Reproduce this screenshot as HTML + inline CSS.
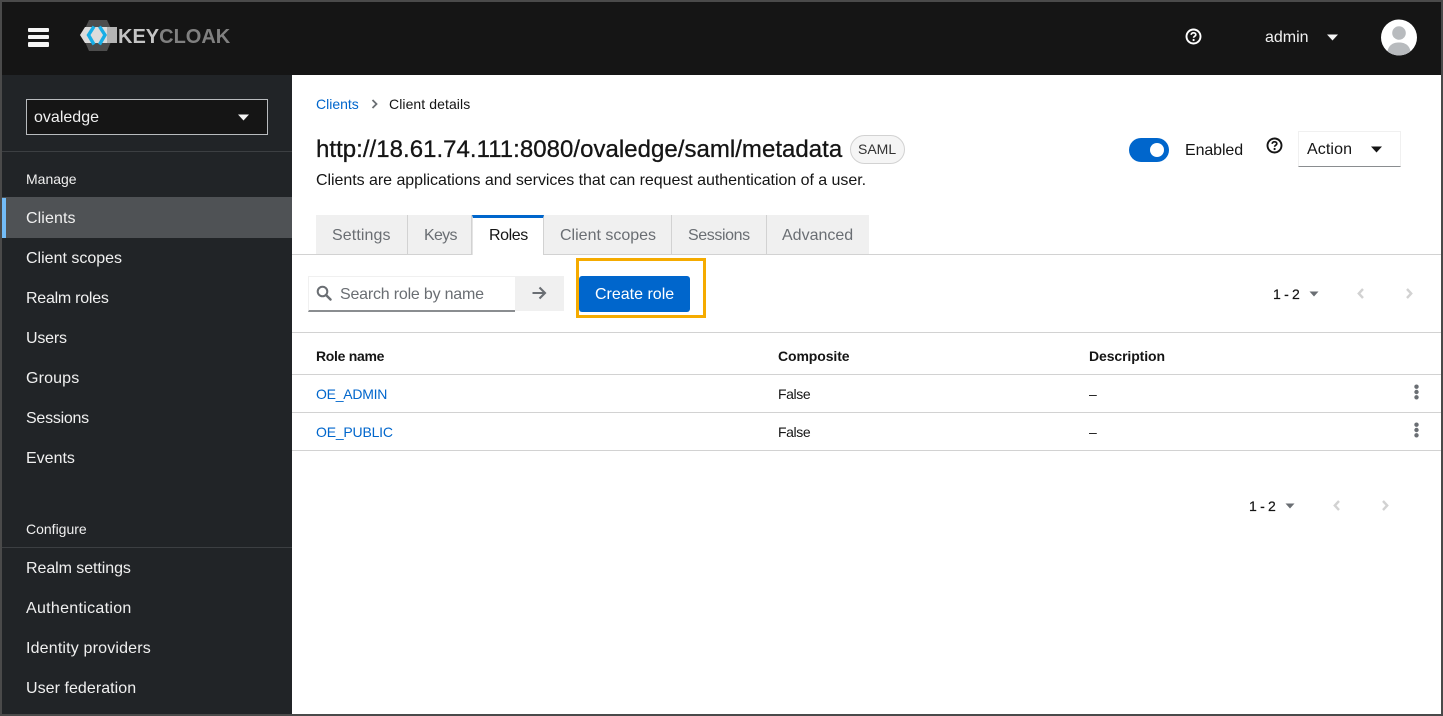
<!DOCTYPE html>
<html><head><meta charset="utf-8"><style>
html,body{margin:0;padding:0;background:#fff}
#r{position:relative;width:1443px;height:716px;overflow:hidden;background:#fff;font-family:"Liberation Sans",sans-serif;color:#151515}
#r div,#r svg{position:absolute}
.t{white-space:nowrap;line-height:20px}
.n{left:26px;color:#f0f0f0;font-size:16px}
.s{left:26px;color:#f0f0f0;font-size:14px}
.tab{top:215px;height:39px;background:#f0f0f0;border-right:1px solid #d2d2d2;box-sizing:border-box}
.tl{top:226px;font-size:16px;color:#6a6e73}
.h{top:346px;font-size:14px;font-weight:bold;color:#151515}
.c{font-size:14px;color:#151515}
.a{font-size:14px;color:#06c}
.l{left:292px;width:1149px;height:1px;background:#d2d2d2}
</style></head><body><div id="r">
<div style="left:0;top:0;width:1443px;height:75px;background:#151515"></div>
<div style="left:2px;top:75px;width:290px;height:639px;background:#212427"></div>

<div style="left:28px;top:28px;width:21px;height:4px;background:#f5f5f5;border-radius:1px"></div>
<div style="left:28px;top:35px;width:21px;height:4px;background:#f5f5f5;border-radius:1px"></div>
<div style="left:28px;top:42px;width:21px;height:5px;background:#f5f5f5;border-radius:1px"></div>

<svg style="left:79px;top:20px" width="40" height="31" viewBox="0 0 40 31">
<polygon points="10,0 28,0 35,15 28,31 10,31 3,15" fill="#4d4d4d"/>
<polygon points="6,7 38,7 38,23 6,23 1,15" fill="#dcdcdc"/>
<polygon points="28,7 38,7 38,23 28,23" fill="#b4b4b4"/>
<path d="M15 6.500 L9.500 15 L15 24.500" fill="none" stroke="#18aee6" stroke-width="3.400"/>
<path d="M20.500 6.500 L26 15 L20.500 24.500" fill="none" stroke="#18aee6" stroke-width="3.400"/>
</svg>
<div class="t" style="left:118px;top:26px;font-size:20px;line-height:22px;font-weight:bold;color:#c4c4c4;letter-spacing:0">KEY<span style="color:#808080">CLOAK</span></div>

<svg style="left:1185px;top:28px" width="17" height="17" viewBox="0 0 17 17"><circle cx="8.5" cy="8.5" r="7" fill="none" stroke="#fff" stroke-width="1.9"/><path d="M6.200 6.800C6.300 5.400 7.300 4.800 8.500 4.800C9.800 4.800 10.800 5.500 10.800 6.700C10.800 8.200 8.600 8.200 8.600 9.800" fill="none" stroke="#fff" stroke-width="1.700"/><circle cx="8.600" cy="12" r="1.100" fill="#fff"/></svg>
<div class="t" style="left:1265px;top:28px;font-size:16px;color:#f0f0f0">admin</div>
<svg style="left:1326px;top:34px" width="13" height="7" viewBox="0 0 13 7"><path d="M1 0.500H12L6.500 6.500Z" fill="#f5f5f5"/></svg>
<svg style="left:1381px;top:19px" width="36" height="37" viewBox="0 0 36 37"><defs><clipPath id="av"><circle cx="18" cy="18.500" r="18"/></clipPath></defs><circle cx="18" cy="18.500" r="18" fill="#fff"/><g clip-path="url(#av)"><circle cx="18" cy="14" r="6.800" fill="#b8bbbe"/><path d="M6 37C6 27 11 23.500 18 23.500C25 23.500 30 27 30 37Z" fill="#b8bbbe"/></g></svg>

<div style="left:26px;top:99px;width:242px;height:36px;box-sizing:border-box;background:#151515;border:1px solid #b8bbbe"></div>
<div class="t" style="left:34px;top:107px;font-size:16px;color:#f0f0f0;letter-spacing:.01px;line-height:21px">ovaledge</div>
<svg style="left:237px;top:114px" width="13" height="7" viewBox="0 0 13 7"><path d="M1 0.500H12L6.500 6.500Z" fill="#f5f5f5"/></svg>
<div style="left:2px;top:151px;width:290px;height:1px;background:#3c3f42"></div>
<div class="t s" style="top:169px">Manage</div>
<div style="left:2px;top:197px;width:290px;height:41px;background:#4f5255"></div>
<div style="left:2px;top:198px;width:4px;height:40px;background:#73bcf7"></div>
<div class="t n" style="top:209px;letter-spacing:.1px">Clients</div>
<div class="t n" style="top:249px">Client scopes</div>
<div class="t n" style="top:289px;letter-spacing:-.25px">Realm roles</div>
<div class="t n" style="top:329px;letter-spacing:-.2px">Users</div>
<div class="t n" style="top:369px;letter-spacing:.15px">Groups</div>
<div class="t n" style="top:409px;letter-spacing:-.25px">Sessions</div>
<div class="t n" style="top:449px">Events</div>
<div class="t s" style="top:519px">Configure</div>
<div style="left:2px;top:547px;width:290px;height:1px;background:#3c3f42"></div>
<div class="t n" style="top:559px;letter-spacing:-.07px">Realm settings</div>
<div class="t n" style="top:599px;letter-spacing:.3px">Authentication</div>
<div class="t n" style="top:639px;letter-spacing:.17px">Identity providers</div>
<div class="t n" style="top:679px;letter-spacing:.05px">User federation</div>

<div class="t a" style="left:316px;top:94px">Clients</div>
<svg style="left:371px;top:99px" width="7" height="10" viewBox="0 0 7 10"><path d="M1.500 1L5.500 5L1.500 9" fill="none" stroke="#6a6e73" stroke-width="1.800"/></svg>
<div class="t" style="left:389px;top:94px;font-size:14px;letter-spacing:.08px">Client details</div>
<div class="t" style="left:316px;top:136px;font-size:24px;line-height:28px;color:#151515;letter-spacing:.03px;-webkit-text-stroke:.3px #151515">http://18.61.74.111:8080/ovaledge/saml/metadata</div>
<div style="left:850px;top:135px;width:55px;height:29px;box-sizing:border-box;border:1px solid #d2d2d2;border-radius:15px;background:#f5f5f5"></div>
<div class="t" style="left:858px;top:139px;font-size:14px;color:#333">SAML</div>
<div class="t" style="left:316px;top:170px;font-size:16px;color:#151515;letter-spacing:-.04px;line-height:21px">Clients are applications and services that can request authentication of a user.</div>

<div style="left:1129px;top:138px;width:40px;height:24px;border-radius:12px;background:#06c"></div>
<div style="left:1150px;top:143px;width:14px;height:14px;border-radius:50%;background:#fff"></div>
<div class="t" style="left:1185px;top:140px;font-size:16px;color:#151515;letter-spacing:-.1px;line-height:21px">Enabled</div>
<svg style="left:1266px;top:137px" width="17" height="17" viewBox="0 0 17 17"><circle cx="8.500" cy="8.500" r="7" fill="none" stroke="#151515" stroke-width="1.900"/><path d="M6.200 6.800C6.300 5.400 7.300 4.800 8.500 4.800C9.800 4.800 10.800 5.500 10.800 6.700C10.800 8.200 8.600 8.200 8.600 9.800" fill="none" stroke="#151515" stroke-width="1.700"/><circle cx="8.600" cy="12" r="1.100" fill="#151515"/></svg>
<div style="left:1298px;top:131px;width:103px;height:36px;box-sizing:border-box;border:1px solid #f0f0f0;border-bottom:1px solid #8a8d90"></div>
<div class="t" style="left:1307px;top:139px;font-size:16px;color:#151515;letter-spacing:.1px;line-height:21px">Action</div>
<svg style="left:1370px;top:146px" width="13" height="7" viewBox="0 0 13 7"><path d="M1 0.500H12L6.500 6.500Z" fill="#151515"/></svg>

<div class="l" style="top:254px"></div>
<div class="tab" style="left:316px;width:92px"></div>
<div class="tab" style="left:408px;width:64px"></div>
<div class="tab" style="left:544px;width:128px"></div>
<div class="tab" style="left:672px;width:95px"></div>
<div class="tab" style="left:767px;width:102px;border-right:0"></div>
<div style="left:472px;top:215px;width:72px;height:40px;box-sizing:border-box;background:#fff;border-top:3px solid #06c;border-left:1px solid #e4e4e4;border-right:1px solid #d2d2d2"></div>
<div class="t tl" style="left:332px;letter-spacing:.1px">Settings</div>
<div class="t tl" style="left:424px;letter-spacing:-.7px">Keys</div>
<div class="t tl" style="left:489px;color:#151515;letter-spacing:-.4px">Roles</div>
<div class="t tl" style="left:560px">Client scopes</div>
<div class="t tl" style="left:688px;letter-spacing:-.4px">Sessions</div>
<div class="t tl" style="left:782px">Advanced</div>

<div style="left:308px;top:276px;width:207px;height:36px;box-sizing:border-box;border:1px solid #f0f0f0;border-bottom:2px solid #8a8d90;border-right:0"></div>
<div style="left:515px;top:276px;width:49px;height:35px;background:#f0f0f0"></div>
<svg style="left:316px;top:285px" width="16" height="16" viewBox="0 0 16 16"><circle cx="6.500" cy="6.500" r="4.800" fill="none" stroke="#6a6e73" stroke-width="2"/><path d="M10 10L14.500 14.500" stroke="#6a6e73" stroke-width="2.400" stroke-linecap="round"/></svg>
<div class="t" style="left:340px;top:284px;font-size:16px;color:#6a6e73;letter-spacing:-.2px;line-height:21px">Search role by name</div>
<svg style="left:531px;top:285px" width="16" height="16" viewBox="0 0 16 16"><path d="M1.500 8H14M8.500 2.500L14 8L8.500 13.500" fill="none" stroke="#6a6e73" stroke-width="2.100"/></svg>
<div style="left:576px;top:258px;width:130px;height:60px;box-sizing:border-box;border:3px solid #f5ab00"></div>
<div style="left:579px;top:276px;width:111px;height:36px;background:#06c;border-radius:3px"></div>
<div class="t" style="left:595px;top:284px;font-size:16px;color:#fff;line-height:21px">Create role</div>

<div class="t" style="left:1273px;top:284px;font-size:14px;color:#151515;-webkit-text-stroke:.2px #151515;letter-spacing:-.3px">1 - 2</div>
<svg style="left:1309px;top:291px" width="10" height="6" viewBox="0 0 10 6"><path d="M0.500 0.500H9.500L5 5.500Z" fill="#6a6e73"/></svg>
<svg style="left:1357px;top:288px" width="8" height="11" viewBox="0 0 8 11"><path d="M6 1L1.800 5.500L6 10" fill="none" stroke="#d2d2d2" stroke-width="2.400"/></svg>
<svg style="left:1405px;top:288px" width="8" height="11" viewBox="0 0 8 11"><path d="M2 1L6.200 5.500L2 10" fill="none" stroke="#d2d2d2" stroke-width="2.400"/></svg>

<div class="l" style="top:332px"></div>
<div class="t h" style="left:316px;letter-spacing:-.3px">Role name</div>
<div class="t h" style="left:778px;letter-spacing:-.1px">Composite</div>
<div class="t h" style="left:1089px;letter-spacing:-.1px">Description</div>
<div class="l" style="top:374px"></div>
<div class="t a" style="left:316px;top:384px;letter-spacing:-.25px">OE_ADMIN</div>
<div class="t c" style="left:778px;top:384px;letter-spacing:-.4px">False</div>
<div class="t c" style="left:1089px;top:384px">–</div>
<div class="l" style="top:412px"></div>
<div class="t a" style="left:316px;top:422px;letter-spacing:-.2px">OE_PUBLIC</div>
<div class="t c" style="left:778px;top:422px;letter-spacing:-.4px">False</div>
<div class="t c" style="left:1089px;top:422px">–</div>
<div class="l" style="top:450px"></div>
<svg style="left:1413px;top:384px" width="7" height="16" viewBox="0 0 7 16"><circle cx="3.500" cy="2.700" r="2.200" fill="#6a6e73"/><circle cx="3.500" cy="8" r="2.200" fill="#6a6e73"/><circle cx="3.500" cy="13.300" r="2.200" fill="#6a6e73"/></svg>
<svg style="left:1413px;top:422px" width="7" height="16" viewBox="0 0 7 16"><circle cx="3.500" cy="2.700" r="2.200" fill="#6a6e73"/><circle cx="3.500" cy="8" r="2.200" fill="#6a6e73"/><circle cx="3.500" cy="13.300" r="2.200" fill="#6a6e73"/></svg>

<div class="t" style="left:1249px;top:496px;font-size:14px;color:#151515;-webkit-text-stroke:.2px #151515;letter-spacing:-.3px">1 - 2</div>
<svg style="left:1285px;top:503px" width="10" height="6" viewBox="0 0 10 6"><path d="M0.500 0.500H9.500L5 5.500Z" fill="#6a6e73"/></svg>
<svg style="left:1333px;top:500px" width="8" height="11" viewBox="0 0 8 11"><path d="M6 1L1.800 5.500L6 10" fill="none" stroke="#d2d2d2" stroke-width="2.400"/></svg>
<svg style="left:1381px;top:500px" width="8" height="11" viewBox="0 0 8 11"><path d="M2 1L6.200 5.500L2 10" fill="none" stroke="#d2d2d2" stroke-width="2.400"/></svg>

<div style="left:0;top:0;width:1443px;height:716px;box-sizing:border-box;border:2px solid #4a4a4a"></div>
</div></body></html>
